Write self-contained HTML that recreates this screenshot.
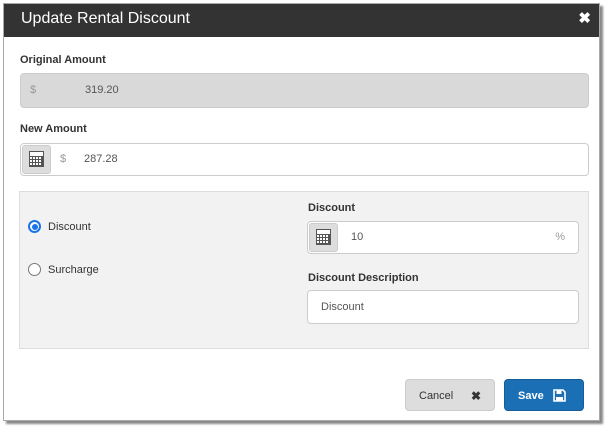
<!DOCTYPE html>
<html><head><style>
body{margin:0;width:610px;height:430px;background:#fff;font-family:"Liberation Sans",sans-serif;position:relative;overflow:hidden}
.dlg{position:absolute;left:3px;top:3px;width:597px;height:418px;background:#fff;box-shadow:3px 3px 2px #888;border:1px solid #aaa;box-sizing:border-box}
.hdr{position:absolute;left:0;top:0;right:0;height:33px;background:#333;color:#fff;font-size:16px;line-height:30px;padding-left:17px}
.x{position:absolute;right:8px;top:0;font-size:15px;font-weight:bold}
.lbl{position:absolute;font-size:11px;font-weight:bold;color:#333}
.inp{position:absolute;border:1px solid #ccc;border-radius:4px;background:#fff;box-sizing:border-box;font-size:11px;color:#555}
.calc{position:absolute;left:1px;top:1px;width:29px;height:29px;background:#ddd;border-radius:3px;border:1px solid #ccc;box-sizing:border-box}
.t{position:absolute;top:0;line-height:31px}
.panel{position:absolute;left:15px;top:187px;width:570px;height:158px;background:#f2f2f2;border:1px solid #ddd;box-sizing:border-box}
.radio{position:absolute;width:13px;height:13px;border-radius:50%;border:1px solid #777;background:#fff;box-sizing:border-box}
.btn{position:absolute;top:375px;height:32px;border-radius:4px;font-size:11px;line-height:32px;box-sizing:border-box}
</style></head><body>
<div class="dlg">
<div class="hdr">Update Rental Discount<span class="x">✖</span></div>
<div class="lbl" style="left:16px;top:50px">Original Amount</div>
<div class="inp" style="left:16px;top:69px;width:569px;height:35px;background:#d9d9d9;border-color:#ccc;"><span class="t" style="left:9px;line-height:33px;color:#999">$</span><span class="t" style="left:64px;line-height:33px">319.20</span></div>
<div class="lbl" style="left:16px;top:119px">New Amount</div>
<div class="inp" style="left:16px;top:139px;width:569px;height:33px">
<div class="calc"><svg width="27" height="27" viewBox="0 0 27 27"><rect x="6" y="5" width="15" height="16" fill="#555"/><g fill="#fff"><rect x="7" y="6" width="13" height="4"/><rect x="7" y="11" width="2" height="2"/><rect x="10" y="11" width="2" height="2"/><rect x="13" y="11" width="2" height="2"/><rect x="16" y="11" width="2" height="2"/><rect x="7" y="14" width="2" height="2"/><rect x="10" y="14" width="2" height="2"/><rect x="13" y="14" width="2" height="2"/><rect x="16" y="14" width="2" height="2"/><rect x="7" y="17" width="2" height="2"/><rect x="10" y="17" width="2" height="2"/><rect x="13" y="17" width="2" height="2"/><rect x="16" y="17" width="2" height="2"/></g></svg></div>
<span class="t" style="left:39px;color:#999">$</span><span class="t" style="left:63px">287.28</span></div>
<div class="panel">
<div class="radio" style="left:8px;top:28px;border:2px solid #1a73e8;padding:1.5px;background:#fff"><div style="width:6px;height:6px;border-radius:50%;background:#1a73e8"></div></div>
<div style="position:absolute;left:28px;top:29px;font-size:11px;color:#333">Discount</div>
<div class="radio" style="left:8px;top:71px"></div>
<div style="position:absolute;left:28px;top:72px;font-size:11px;color:#333">Surcharge</div>
<div class="lbl" style="left:288px;top:10px">Discount</div>
<div class="inp" style="left:287px;top:29px;width:272px;height:33px">
<div class="calc"><svg width="27" height="27" viewBox="0 0 27 27"><rect x="6" y="5" width="15" height="16" fill="#555"/><g fill="#fff"><rect x="7" y="6" width="13" height="4"/><rect x="7" y="11" width="2" height="2"/><rect x="10" y="11" width="2" height="2"/><rect x="13" y="11" width="2" height="2"/><rect x="16" y="11" width="2" height="2"/><rect x="7" y="14" width="2" height="2"/><rect x="10" y="14" width="2" height="2"/><rect x="13" y="14" width="2" height="2"/><rect x="16" y="14" width="2" height="2"/><rect x="7" y="17" width="2" height="2"/><rect x="10" y="17" width="2" height="2"/><rect x="13" y="17" width="2" height="2"/><rect x="16" y="17" width="2" height="2"/></g></svg></div>
<span class="t" style="left:43px">10</span><span class="t" style="right:13px;color:#999">%</span></div>
<div class="lbl" style="left:288px;top:80px">Discount Description</div>
<div class="inp" style="left:287px;top:98px;width:272px;height:34px"><span class="t" style="left:13px;line-height:32px">Discount</span></div>
</div>
<div class="btn" style="left:401px;width:90px;background:#ddd;border:1px solid #ccc;color:#333"><span style="position:absolute;left:13px">Cancel</span><span style="position:absolute;left:65px;font-weight:bold;font-size:12px">✖</span></div>
<div class="btn" style="left:500px;width:80px;background:#1a6fb5;color:#fff;border:1px solid #155d99"><span style="position:absolute;left:13px;font-weight:bold">Save</span><svg style="position:absolute;left:48px;top:9px" width="13" height="13" viewBox="0 0 13 13"><path d="M1 1h9l2 2v9H1z" fill="none" stroke="#fff" stroke-width="1.6"/><rect x="3.5" y="1.5" width="5" height="3.5" fill="#fff"/><rect x="3" y="8" width="7" height="4" fill="#fff"/></svg></div>
</div>
</body></html>
